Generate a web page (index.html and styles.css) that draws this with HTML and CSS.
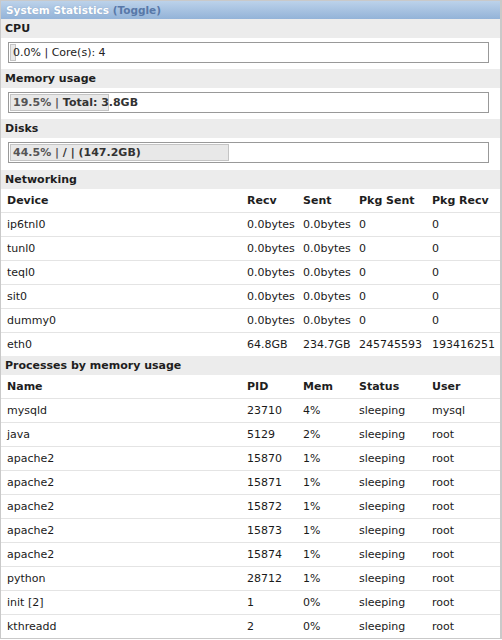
FILE: index.html
```html
<!DOCTYPE html>
<html>
<head>
<meta charset="utf-8">
<link rel="stylesheet" href="styles.css">
</head>
<body>
<div class="panel">
  <div class="header"><span class="title">System Statistics</span> <span class="toggle">(Toggle)</span></div>

  <div class="section-title">CPU</div>
  <div class="bar-wrap">
    <div class="bar"><div class="fill" style="width:4px"><span class="bar-text light">0.0% | Core(s): 4</span></div></div>
  </div>

  <div class="section-title">Memory usage</div>
  <div class="bar-wrap">
    <div class="bar"><div class="fill" style="width:97px"><span class="bar-text"><span class="pct">19.5% |</span> Total: 3.8GB</span></div></div>
  </div>

  <div class="section-title">Disks</div>
  <div class="bar-wrap last">
    <div class="bar"><div class="fill" style="width:217px"><span class="bar-text"><span class="pct">44.5% |</span> / | (147.2GB)</span></div></div>
  </div>

  <div class="section-title">Networking</div>
  <table class="grid">
    <thead>
      <tr><th class="c1">Device</th><th class="c2">Recv</th><th class="c3">Sent</th><th class="c4">Pkg Sent</th><th class="c5">Pkg Recv</th></tr>
    </thead>
    <tbody>
      <tr><td>ip6tnl0</td><td>0.0bytes</td><td>0.0bytes</td><td>0</td><td>0</td></tr>
      <tr><td>tunl0</td><td>0.0bytes</td><td>0.0bytes</td><td>0</td><td>0</td></tr>
      <tr><td>teql0</td><td>0.0bytes</td><td>0.0bytes</td><td>0</td><td>0</td></tr>
      <tr><td>sit0</td><td>0.0bytes</td><td>0.0bytes</td><td>0</td><td>0</td></tr>
      <tr><td>dummy0</td><td>0.0bytes</td><td>0.0bytes</td><td>0</td><td>0</td></tr>
      <tr><td>eth0</td><td>64.8GB</td><td>234.7GB</td><td>245745593</td><td>193416251</td></tr>
    </tbody>
  </table>

  <div class="section-title">Processes by memory usage</div>
  <table class="grid">
    <thead>
      <tr><th class="c1">Name</th><th class="c2">PID</th><th class="c3">Mem</th><th class="c4">Status</th><th class="c5">User</th></tr>
    </thead>
    <tbody>
      <tr><td>mysqld</td><td>23710</td><td>4%</td><td>sleeping</td><td>mysql</td></tr>
      <tr><td>java</td><td>5129</td><td>2%</td><td>sleeping</td><td>root</td></tr>
      <tr><td>apache2</td><td>15870</td><td>1%</td><td>sleeping</td><td>root</td></tr>
      <tr><td>apache2</td><td>15871</td><td>1%</td><td>sleeping</td><td>root</td></tr>
      <tr><td>apache2</td><td>15872</td><td>1%</td><td>sleeping</td><td>root</td></tr>
      <tr><td>apache2</td><td>15873</td><td>1%</td><td>sleeping</td><td>root</td></tr>
      <tr><td>apache2</td><td>15874</td><td>1%</td><td>sleeping</td><td>root</td></tr>
      <tr><td>python</td><td>28712</td><td>1%</td><td>sleeping</td><td>root</td></tr>
      <tr><td>init [2]</td><td>1</td><td>0%</td><td>sleeping</td><td>root</td></tr>
      <tr><td>kthreadd</td><td>2</td><td>0%</td><td>sleeping</td><td>root</td></tr>
    </tbody>
  </table>
</div>
</body>
</html>
```

FILE: styles.css
```css
html, body {
  margin: 0;
  padding: 0;
  background: #ffffff;
}
body {
  font-family: "DejaVu Sans", Verdana, sans-serif;
  font-size: 11px;
  color: #1a1a1a;
}
.panel {
  width: 499px;
  border: 1px solid #c9c9c9;
  border-right-width: 2px;
}
.header {
  height: 18px;
  line-height: 18px;
  padding-left: 5px;
  background: linear-gradient(#bcd2ea, #93b3d8);
  font-weight: bold;
  font-size: 10.5px;
}
.title {
  color: #ffffff;
  text-shadow: 0 0 1px rgba(90, 120, 160, 0.5);
}
.toggle {
  color: #5878a8;
}
.section-title {
  background: #ececec;
  height: 19px;
  line-height: 19px;
  padding-left: 4px;
  font-weight: bold;
  font-size: 11px;
  color: #1e1e1e;
}
.bar-wrap {
  padding: 4px 11px 6px 7px;
}
.bar-wrap.last {
  padding-bottom: 7px;
}
.bar {
  border: 1px solid #999;
  padding: 1px;
  height: 17px;
}
.fill {
  height: 15px;
  border: 1px solid #c4c4c4;
  background: #e8e8e8;
  white-space: nowrap;
  overflow: visible;
}
.bar-text {
  display: inline-block;
  padding-left: 2px;
  line-height: 15px;
  font-weight: bold;
  color: #333;
}
.bar-text.light {
  font-weight: normal;
  color: #222;
}
.pct {
  color: #555;
}
.grid {
  width: 100%;
  border-collapse: collapse;
}
.grid th, .grid td {
  text-align: left;
  padding: 0 0 0 6px;
  height: 23px;
  border-bottom: 1px solid #e4e4e4;
  white-space: nowrap;
}
.grid th {
  font-weight: bold;
  font-size: 11px;
  color: #1e1e1e;
}
.grid tbody tr:last-child td {
  border-bottom: none;
}
.c1 { width: 234px; }
.c2 { width: 50px; }
.c3 { width: 50px; }
.c4 { width: 67px; }
```
